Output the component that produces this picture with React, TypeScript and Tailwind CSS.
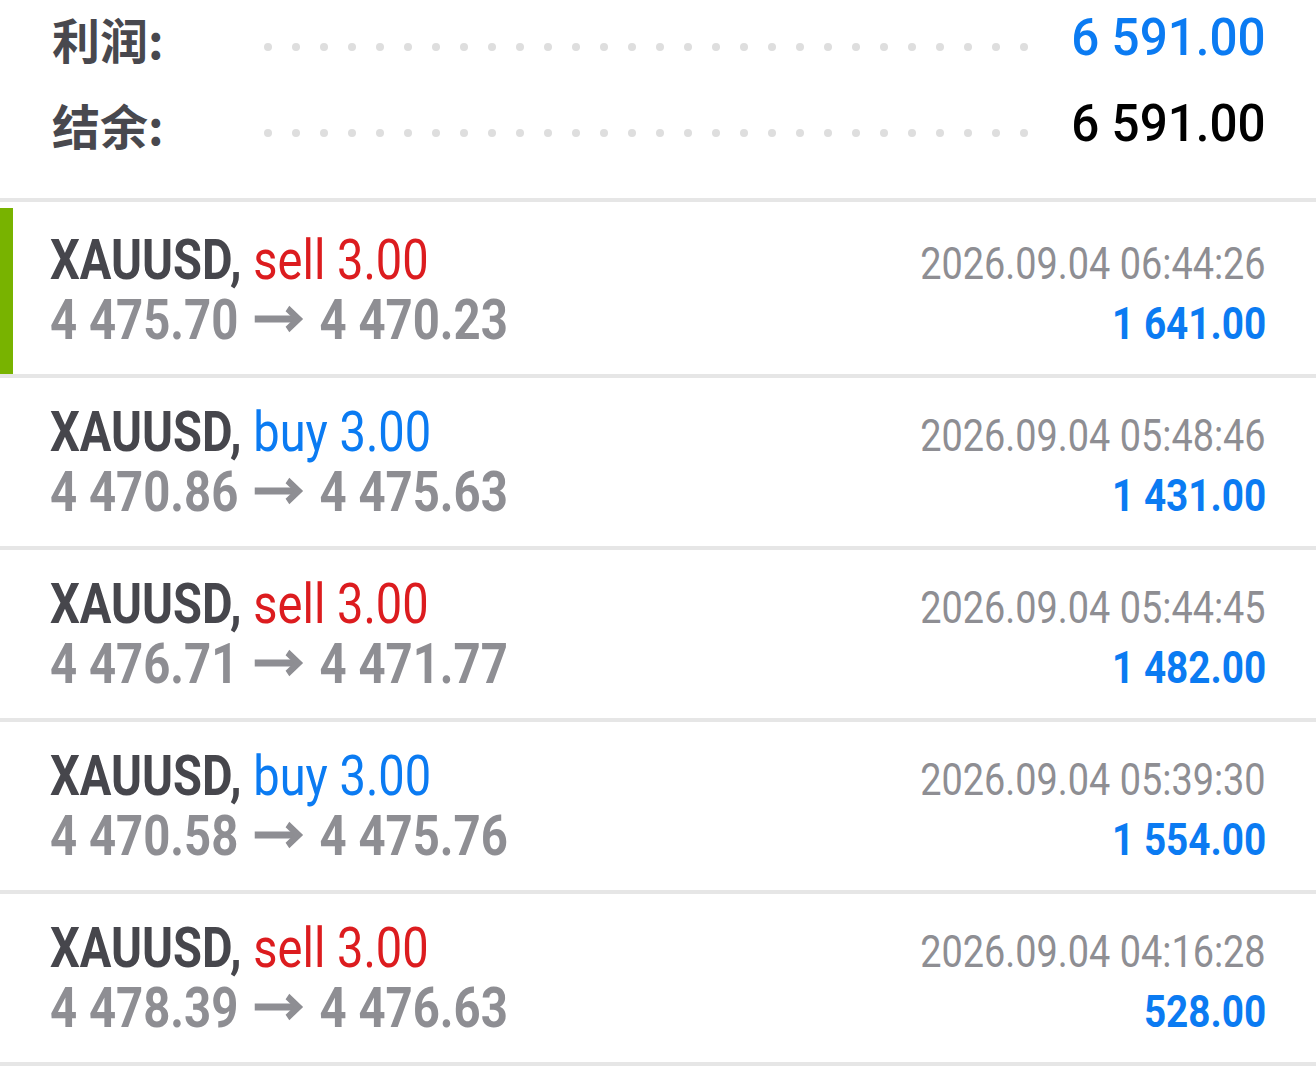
import React from 'react';

// 成交历史 — 汇总 + 订单列表

type Deal = {
    side: 'sell' | 'buy';
    open: string;
    close: string;
    time: string;
    profit: string;
};

const deals: Deal[] = [
    { side: 'sell', open: '4 475.70', close: '4 470.23', time: '2026.09.04 06:44:26', profit: '1 641.00' },
    { side: 'buy', open: '4 470.86', close: '4 475.63', time: '2026.09.04 05:48:46', profit: '1 431.00' },
    { side: 'sell', open: '4 476.71', close: '4 471.77', time: '2026.09.04 05:44:45', profit: '1 482.00' },
    { side: 'buy', open: '4 470.58', close: '4 475.76', time: '2026.09.04 05:39:30', profit: '1 554.00' },
    { side: 'sell', open: '4 478.39', close: '4 476.63', time: '2026.09.04 04:16:28', profit: '528.00' },
];

const DOTS = Array.from({ length: 28 });

const SummaryRow: React.FC<{ label: string; value: string; blue?: boolean; className: string }> = ({ label, value, blue, className }) => (
    <div className={`flex items-center ${className}`}>
        <div className="w-[214px] shrink-0 pl-[2px] text-[48px] leading-none font-bold text-[#48484e] font-['Noto_Sans_CJK_SC',sans-serif]">
            {label}
        </div>
        <div className="flex gap-[20px] items-center mt-[18px]">
            {DOTS.map((_, i) => (
                <span key={i} className="w-2 h-2 rounded-full bg-[#dedede]" />
            ))}
        </div>
        <div className="flex-1" />
        <span
            className={`inline-block origin-right scale-x-[0.95] whitespace-nowrap text-[52px] leading-none font-medium font-['Roboto',sans-serif] ${
                blue ? 'text-[#0b7bf2]' : 'text-black'
            }`}
        >
            {value}
        </span>
    </div>
);

// 开仓 → 平仓 之间的粗箭头
const Arrow = () => (
    <svg
        width="58"
        height="28"
        viewBox="0 0 58 28"
        className="inline-block mx-[19px] align-[6px]"
        fill="none"
        stroke="#8e8e93"
        strokeWidth="7"
    >
        <path d="M0 14H52" />
        <path d="M39 3.5L52 14L39 24.5" strokeLinejoin="miter" />
    </svg>
);

const DealRow: React.FC<{ deal: Deal; active?: boolean }> = ({ deal, active }) => (
    <div
        className={`relative border-b-4 border-[#e6e6e6] flex flex-col justify-center px-[50px] font-['Roboto',sans-serif] ${
            active ? 'h-[176px] pt-[4px]' : 'h-[172px]'
        }`}
    >
        {active && <div className="absolute left-0 top-[6px] bottom-0 w-[13px] bg-[#78b300]" />}
        {/* 第一行：品种 + 方向 / 时间 */}
        <div className="flex items-baseline justify-between leading-[60px]">
            <span className="inline-block origin-left scale-x-[0.84] whitespace-nowrap text-[56px]">
                <span className="font-bold text-[#46464c]">XAUUSD,</span>{' '}
                <span className={deal.side === 'sell' ? 'text-[#dc1c1f]' : 'text-[#0b7bf2]'}>
                    {deal.side} 3.00
                </span>
            </span>
            <span className="inline-block origin-right scale-x-[0.86] whitespace-nowrap text-[44px] leading-none text-[#8e8e93]">
                {deal.time}
            </span>
        </div>
        {/* 第二行：开仓 → 平仓 / 盈亏 */}
        <div className="flex items-baseline justify-between leading-[60px]">
            <span className="inline-block origin-left scale-x-[0.845] whitespace-nowrap text-[56px] font-bold text-[#8e8e93]">
                {deal.open}
                <Arrow />
                {deal.close}
            </span>
            <span className="inline-block origin-right scale-x-[0.86] whitespace-nowrap text-[45px] leading-none font-bold text-[#0b7bf2]">
                {deal.profit}
            </span>
        </div>
    </div>
);

export default function App() {
    return (
        <div className="w-[1316px] h-[1088px] bg-white overflow-hidden">
            {/* 汇总 */}
            <div className="h-[202px] border-b-4 border-[#e6e6e6] px-[50px]">
                <SummaryRow label="利润:" value="6 591.00" blue className="h-[76px]" />
                <SummaryRow label="结余:" value="6 591.00" className="h-[96px]" />
            </div>

            {/* 订单 */}
            {deals.map((d, i) => (
                <DealRow key={i} deal={d} active={i === 0} />
            ))}
        </div>
    );
}
